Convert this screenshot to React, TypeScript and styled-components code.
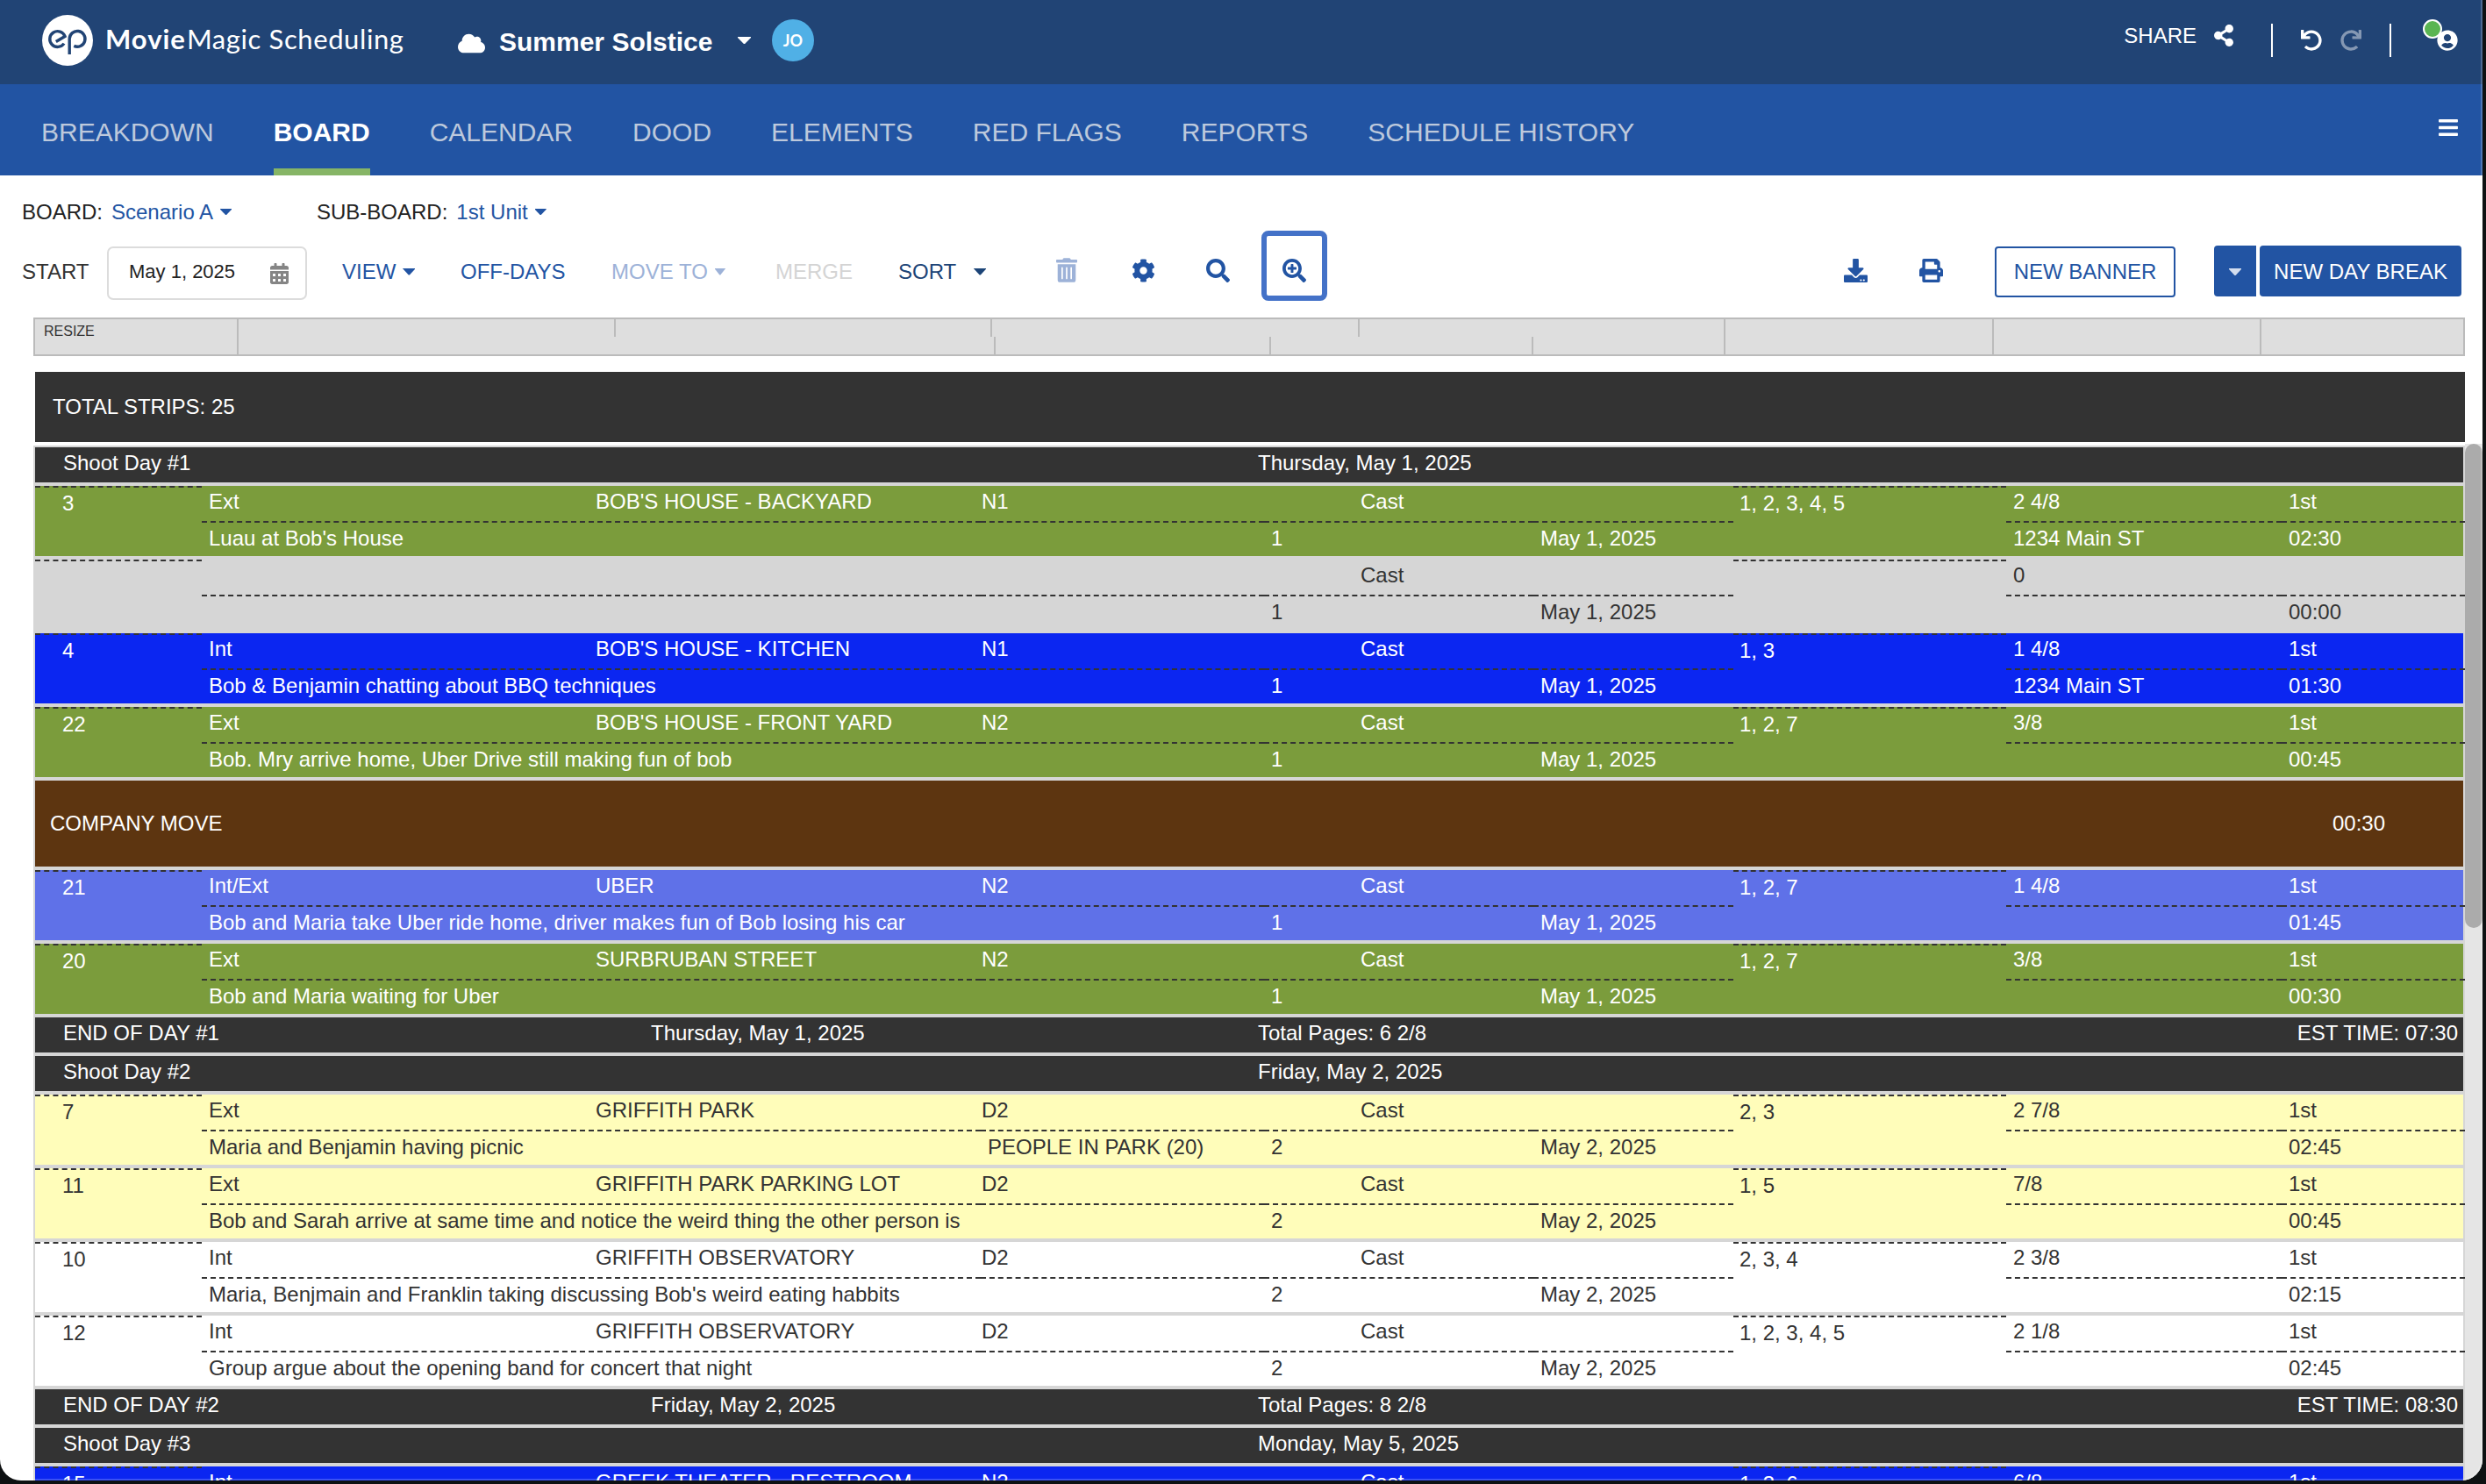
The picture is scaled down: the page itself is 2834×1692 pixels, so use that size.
import React from "react";
import styled, { createGlobalStyle } from "styled-components";
import {
  FaBars,
  FaCalendarAlt,
  FaCloud,
  FaCog,
  FaDownload,
  FaPrint,
  FaRedo,
  FaSearch,
  FaSearchPlus,
  FaShareAlt,
  FaTrashAlt,
  FaUndo,
  FaUserCircle,
} from "react-icons/fa";

const GlobalStyle = createGlobalStyle`
  * { box-sizing: border-box; }
  html, body { margin: 0; padding: 0; }
  body {
    width: 2834px;
    height: 1692px;
    overflow: hidden;
    background: #0e1112;
    font-family: "Liberation Sans", Arial, sans-serif;
    font-size: 24px;
    color: #222;
  }
`;

const Window = styled.div`
  position: relative;
  display: flex;
  flex-direction: column;
  width: 2830px;
  height: 1688px;
  overflow: hidden;
  background: #fff;
  border-radius: 0 0 24px 24px;

  &::after {
    content: "";
    position: absolute;
    inset: 0;
    border-right: 2px solid rgba(255, 255, 255, 0.2);
    border-bottom: 2px solid rgba(255, 255, 255, 0.2);
    border-radius: 0 0 24px 24px;
    pointer-events: none;
  }
`;

/* ---------- Top bar ---------- */

const TopBar = styled.header`
  display: flex;
  align-items: center;
  height: 96px;
  flex: none;
  padding: 0 28px 4px 48px;
  background: #214475;
  color: #fff;
`;

const LogoMark = styled.svg`
  width: 58px;
  height: 58px;
  flex: none;
`;

const Product = styled.div`
  width: 401px;
  padding-left: 14px;
  font-family: Lato, "Open Sans", sans-serif;
  font-size: 31px;
  line-height: 40px;
  letter-spacing: 0.6px;
  white-space: nowrap;
  margin-top: -5px;

  b {
    font-weight: 700;
    letter-spacing: 1px;
    margin-right: 1px;
  }
`;

const CloudIcon = styled(FaCloud)`
  && {
    width: 31px;
    height: 25px;
    flex: none;
    margin: 6px 16px 0 15px;
  }
`;

const ProjectName = styled.div`
  width: 272px;
  font-size: 30px;
  font-weight: 700;
  line-height: 40px;
  margin-top: 3px;
  white-space: nowrap;
`;

const Caret = styled.span<{ $w?: number; $h?: number }>`
  display: inline-block;
  flex: none;
  width: ${(p) => p.$w ?? 14}px;
  height: ${(p) => p.$h ?? 8}px;
  background: currentColor;
  clip-path: polygon(0 0, 100% 0, 100% 12%, 54% 100%, 46% 100%, 0 12%);
`;

const Avatar = styled.div`
  display: flex;
  align-items: center;
  justify-content: center;
  width: 48px;
  height: 48px;
  margin-left: 24px;
  border-radius: 50%;
  background: #50b0e6;
  font: 700 18px Lato, sans-serif;
`;

const TopActions = styled.div`
  display: flex;
  align-items: center;
  margin-left: auto;
`;

const ShareButton = styled.div`
  display: flex;
  align-items: center;
  gap: 20px;
  margin-top: -11px;

  svg {
    width: 22px;
    height: 25px;
  }
`;

const Separator = styled.span<{ $left: number }>`
  width: 2px;
  height: 38px;
  margin-left: ${(p) => p.$left}px;
  background: #fff;
`;

const HistoryButton = styled.span<{ $left: number; $off?: boolean }>`
  display: flex;
  margin-left: ${(p) => p.$left}px;
  font-size: 24px;
  opacity: ${(p) => (p.$off ? 0.45 : 1)};
`;

const Account = styled.span`
  position: relative;
  display: flex;
  margin-left: 52px;
  font-size: 24px;

  &::before {
    content: "";
    position: absolute;
    left: -16px;
    top: -12px;
    width: 18px;
    height: 18px;
    border: 2px solid #fff;
    border-radius: 50%;
    background: #5ab552;
  }
`;

/* ---------- Navigation ---------- */

const Nav = styled.nav`
  display: flex;
  gap: 68px;
  height: 104px;
  flex: none;
  padding: 0 28px 0 47px;
  background: #2254a3;
`;

const Tab = styled.a<{ $active?: boolean }>`
  display: flex;
  align-items: center;
  padding-top: 13px;
  border-bottom: 8px solid ${(p) => (p.$active ? "#86b566" : "transparent")};
  color: ${(p) => (p.$active ? "#fff" : "#bdc9dc")};
  font-size: 30px;
  font-weight: ${(p) => (p.$active ? 700 : 400)};
  white-space: nowrap;
`;

const MenuIcon = styled(FaBars)`
  && {
    width: 22px;
    height: 25px;
    margin: 37px 0 0 auto;
    color: #fff;
  }
`;

/* ---------- Board selectors and tools ---------- */

const Selectors = styled.div`
  display: grid;
  grid-template-columns: 336px auto;
  justify-content: start;
  align-items: center;
  height: 63px;
  flex: none;
  padding: 20px 0 0 25px;
`;

const Selector = styled.div`
  display: flex;
  align-items: center;
  white-space: nowrap;

  a {
    display: flex;
    align-items: center;
    gap: 8px;
    margin-left: 10px;
    color: #2254a3;
  }
`;

const Toolbar = styled.div`
  display: grid;
  grid-template-columns:
    97px 268px 135px 172px 187px 140px 180px 86px 85px 63px 664px
    86px 86px 250px auto;
  align-items: center;
  height: 94px;
  flex: none;
  padding-left: 25px;
  white-space: nowrap;
`;

const Tool = styled.div<{ $color?: string; $gap?: number }>`
  display: flex;
  align-items: center;
  gap: ${(p) => p.$gap ?? 8}px;
  margin-top: -1px;
  color: ${(p) => p.$color ?? "#2254a3"};
`;

const DateField = styled.div`
  display: flex;
  align-items: center;
  justify-content: space-between;
  width: 228px;
  height: 61px;
  margin-top: 3px;
  padding: 0 19px 3px 23px;
  border: 2px solid #dcdcdc;
  border-radius: 7px;
  font-size: 22px;

  svg {
    width: 21px;
    height: 24px;
    margin-top: 3px;
    color: #858585;
  }
`;

const IconTool = styled.div<{ $size?: number; $w?: number; $off?: boolean }>`
  display: flex;
  margin-top: -4px;
  color: ${(p) => (p.$off ? "#9db2d8" : "#2254a3")};

  svg {
    width: ${(p) => p.$w ?? p.$size ?? 27}px;
    height: ${(p) => p.$size ?? 27}px;
  }
`;

const FocusedTool = styled(IconTool)`
  align-self: start;
  align-items: center;
  justify-content: center;
  width: 75px;
  height: 80px;
  margin-top: 0;
  padding-top: 10px;
  border: 6px solid #4472c8;
  border-radius: 8px;
`;

const OutlineButton = styled.button`
  width: 206px;
  height: 58px;
  padding: 0;
  border: 2px solid #2254a3;
  border-radius: 4px;
  background: #fff;
  color: #2254a3;
  font: 24px "Liberation Sans", Arial, sans-serif;
`;

const SplitButton = styled.div`
  display: flex;
  gap: 4px;
  height: 58px;
  margin-top: -2px;
`;

const SolidButton = styled.button<{ $w: number; $radius: string }>`
  display: flex;
  align-items: center;
  justify-content: center;
  width: ${(p) => p.$w}px;
  padding: 2px 0 0;
  border: 0;
  border-radius: ${(p) => p.$radius};
  background: #2254a3;
  color: #fff;
  font: 24px "Liberation Sans", Arial, sans-serif;

  span {
    color: #d3ddee;
  }
`;

/* ---------- Column ruler ---------- */

const Ruler = styled.div`
  display: grid;
  grid-template-columns: 232px 1695px 306px 305px auto;
  width: 2772px;
  height: 44px;
  flex: none;
  margin: 5px 0 18px 38px;
  border: 2px solid #bbb;
  background: #dedede;
`;

const RulerCell = styled.div`
  padding: 2px 10px;
  border-right: 2px solid #bbb;
  font-size: 16px;
  line-height: 24px;
  color: #333;

  &:last-child {
    border-right: 0;
  }
`;

const RulerSplit = styled.div`
  display: grid;
  grid-template-rows: 20px 20px;
  border-right: 2px solid #bbb;
`;

const RulerTrack = styled.div<{ $cols: string }>`
  display: grid;
  grid-template-columns: ${(p) => p.$cols};
`;

const RulerTick = styled.span`
  border-right: 2px solid #bbb;
`;

/* ---------- Strip board ---------- */

const TotalBar = styled.div`
  width: 2770px;
  height: 80px;
  flex: none;
  margin: 0 0 2px 40px;
  padding-left: 20px;
  background: #333;
  color: #fff;
  line-height: 79px;
`;

const BoardArea = styled.div`
  display: flex;
  flex: 1;
  min-height: 0;
  padding-left: 38px;
`;

const Strips = styled.div`
  display: flex;
  flex-direction: column;
  gap: 4px;
  width: 2772px;
  height: 1300px;
  margin-top: 2px;
  padding: 2px;
  background: #d6d6d6;
`;

const ScrollTrack = styled.div`
  width: 20px;
  background: #e5e5e5;
`;

const ScrollThumb = styled.div`
  height: 552px;
  border-radius: 10px;
  background: #ababab;
`;

const DayRow = styled.div`
  display: grid;
  grid-template-columns: 670px 692px 1fr auto;
  height: 40px;
  flex: none;
  padding: 0 6px 0 32px;
  background: #333;
  color: #fff;
  line-height: 36px;
`;

const BannerRow = styled.div`
  display: grid;
  grid-template-columns: 2602px auto;
  height: 98px;
  flex: none;
  padding-left: 17px;
  background: #5d3510;
  color: #fff;
  line-height: 97px;
`;

const Strip = styled.div<{ $bg: string; $fg: string }>`
  display: grid;
  grid-template-columns: 190px 1746px 311px 523px;
  height: 80px;
  flex: none;
  background: ${(p) => p.$bg};
  color: ${(p) => p.$fg};
  line-height: 36px;
  white-space: nowrap;
`;

const TallCell = styled.div<{ $pad: number }>`
  padding-left: ${(p) => p.$pad}px;
  border-top: 2px dashed #333;
`;

const SplitCell = styled.div`
  display: grid;
  grid-template-rows: 40px 40px;
`;

const Line = styled.div<{ $cols: string }>`
  display: grid;
  grid-template-columns: ${(p) => p.$cols};
`;

const Cell = styled.div<{ $ruled?: boolean }>`
  min-width: 0;
  padding-left: 8px;
  border-top: ${(p) => (p.$ruled ? "2px dashed #333" : "0")};
`;

type SceneData = {
  kind: "scene";
  tone: keyof typeof tones;
  scene: string;
  ie: string;
  set: string;
  time: string;
  synopsis: string;
  extras?: string;
  day: string;
  date: string;
  cast: string;
  pages: string;
  location?: string;
  unit: string;
  est: string;
};

type RowData =
  | SceneData
  | { kind: "start"; label: string; date: string }
  | { kind: "end"; label: string; date: string; pages: string; est: string }
  | { kind: "banner"; label: string; est: string };

const tones = {
  green: { bg: "#7b9c3c", fg: "#fff" },
  gray: { bg: "#d6d6d6", fg: "#333" },
  blue: { bg: "#0b26f1", fg: "#fff" },
  violet: { bg: "#5f71e8", fg: "#fff" },
  yellow: { bg: "#fffdba", fg: "#333" },
  white: { bg: "#fff", fg: "#333" },
};

const MAY1 = "May 1, 2025";
const MAY2 = "May 2, 2025";

const rows: RowData[] = [
  { kind: "start", label: "Shoot Day #1", date: "Thursday, May 1, 2025" },
  { kind: "scene", tone: "green", scene: "3", ie: "Ext", set: "BOB'S HOUSE - BACKYARD", time: "N1", synopsis: "Luau at Bob's House", day: "1", date: MAY1, cast: "1, 2, 3, 4, 5", pages: "2 4/8", location: "1234 Main ST", unit: "1st", est: "02:30" },
  { kind: "scene", tone: "gray", scene: "", ie: "", set: "", time: "", synopsis: "", day: "1", date: MAY1, cast: "", pages: "0", unit: "", est: "00:00" },
  { kind: "scene", tone: "blue", scene: "4", ie: "Int", set: "BOB'S HOUSE - KITCHEN", time: "N1", synopsis: "Bob & Benjamin chatting about BBQ techniques", day: "1", date: MAY1, cast: "1, 3", pages: "1 4/8", location: "1234 Main ST", unit: "1st", est: "01:30" },
  { kind: "scene", tone: "green", scene: "22", ie: "Ext", set: "BOB'S HOUSE - FRONT YARD", time: "N2", synopsis: "Bob. Mry arrive home, Uber Drive still making fun of bob", day: "1", date: MAY1, cast: "1, 2, 7", pages: "3/8", unit: "1st", est: "00:45" },
  { kind: "banner", label: "COMPANY MOVE", est: "00:30" },
  { kind: "scene", tone: "violet", scene: "21", ie: "Int/Ext", set: "UBER", time: "N2", synopsis: "Bob and Maria take Uber ride home, driver makes fun of Bob losing his car", day: "1", date: MAY1, cast: "1, 2, 7", pages: "1 4/8", unit: "1st", est: "01:45" },
  { kind: "scene", tone: "green", scene: "20", ie: "Ext", set: "SURBRUBAN STREET", time: "N2", synopsis: "Bob and Maria waiting for Uber", day: "1", date: MAY1, cast: "1, 2, 7", pages: "3/8", unit: "1st", est: "00:30" },
  { kind: "end", label: "END OF DAY #1", date: "Thursday, May 1, 2025", pages: "6 2/8", est: "07:30" },
  { kind: "start", label: "Shoot Day #2", date: "Friday, May 2, 2025" },
  { kind: "scene", tone: "yellow", scene: "7", ie: "Ext", set: "GRIFFITH PARK", time: "D2", synopsis: "Maria and Benjamin having picnic", extras: "PEOPLE IN PARK (20)", day: "2", date: MAY2, cast: "2, 3", pages: "2 7/8", unit: "1st", est: "02:45" },
  { kind: "scene", tone: "yellow", scene: "11", ie: "Ext", set: "GRIFFITH PARK PARKING LOT", time: "D2", synopsis: "Bob and Sarah arrive at same time and notice the weird thing the other person is", day: "2", date: MAY2, cast: "1, 5", pages: "7/8", unit: "1st", est: "00:45" },
  { kind: "scene", tone: "white", scene: "10", ie: "Int", set: "GRIFFITH OBSERVATORY", time: "D2", synopsis: "Maria, Benjmain and Franklin taking discussing Bob's weird eating habbits", day: "2", date: MAY2, cast: "2, 3, 4", pages: "2 3/8", unit: "1st", est: "02:15" },
  { kind: "scene", tone: "white", scene: "12", ie: "Int", set: "GRIFFITH OBSERVATORY", time: "D2", synopsis: "Group argue about the opening band for concert that night", day: "2", date: MAY2, cast: "1, 2, 3, 4, 5", pages: "2 1/8", unit: "1st", est: "02:45" },
  { kind: "end", label: "END OF DAY #2", date: "Friday, May 2, 2025", pages: "8 2/8", est: "08:30" },
  { kind: "start", label: "Shoot Day #3", date: "Monday, May 5, 2025" },
  { kind: "scene", tone: "blue", scene: "15", ie: "Int", set: "GREEK THEATER - RESTROOM", time: "N2", synopsis: "", day: "3", date: "May 5, 2025", cast: "1, 3, 6", pages: "6/8", unit: "1st", est: "" },
];

const TOP_COLS = "441px 440px 432px 433px";
const BOTTOM_COLS = "888px 323px 307px 228px";
const SIDE_COLS = "314px 209px";

function SceneStrip({ row }: { row: SceneData }) {
  const { bg, fg } = tones[row.tone];
  return (
    <Strip $bg={bg} $fg={fg}>
      <TallCell $pad={31}>{row.scene}</TallCell>
      <SplitCell>
        <Line $cols={TOP_COLS}>
          <Cell>{row.ie}</Cell>
          <Cell>{row.set}</Cell>
          <Cell>{row.time}</Cell>
          <Cell>Cast</Cell>
        </Line>
        <Line $cols={BOTTOM_COLS}>
          <Cell $ruled>{row.synopsis}</Cell>
          <Cell $ruled>{row.extras}</Cell>
          <Cell $ruled>{row.day}</Cell>
          <Cell $ruled>{row.date}</Cell>
        </Line>
      </SplitCell>
      <TallCell $pad={7}>{row.cast}</TallCell>
      <SplitCell>
        <Line $cols={SIDE_COLS}>
          <Cell>{row.pages}</Cell>
          <Cell>{row.unit}</Cell>
        </Line>
        <Line $cols={SIDE_COLS}>
          <Cell $ruled>{row.location}</Cell>
          <Cell $ruled>{row.est}</Cell>
        </Line>
      </SplitCell>
    </Strip>
  );
}

function BoardRow({ row }: { row: RowData }) {
  switch (row.kind) {
    case "start":
      return (
        <DayRow>
          <span>{row.label}</span>
          <span />
          <span>{row.date}</span>
        </DayRow>
      );
    case "end":
      return (
        <DayRow>
          <span>{row.label}</span>
          <span>{row.date}</span>
          <span>Total Pages: {row.pages}</span>
          <span>EST TIME: {row.est}</span>
        </DayRow>
      );
    case "banner":
      return (
        <BannerRow>
          <span>{row.label}</span>
          <span>{row.est}</span>
        </BannerRow>
      );
    default:
      return <SceneStrip row={row} />;
  }
}

const tabs = ["BREAKDOWN", "BOARD", "CALENDAR", "DOOD", "ELEMENTS", "RED FLAGS", "REPORTS", "SCHEDULE HISTORY"];

export default function App() {
  return (
    <>
      <GlobalStyle />
      <Window>
        <TopBar>
          <LogoMark viewBox="0 0 58 58" fill="none" stroke="#214475" strokeWidth="3.4">
            <circle cx="29" cy="29" r="29" fill="#fff" stroke="none" />
            <path d="M25 32.6A8.9 8.9 0 1 1 26 24.4L15.8 30.5" />
            <path d="M31.2 45V27.3A8.9 8.9 0 1 1 36.3 35.4" />
          </LogoMark>
          <Product>
            <b>Movie</b>Magic Scheduling
          </Product>
          <CloudIcon />
          <ProjectName>Summer Solstice</ProjectName>
          <Caret $w={15} $h={8} />
          <Avatar>JO</Avatar>
          <TopActions>
            <ShareButton>
              SHARE <FaShareAlt />
            </ShareButton>
            <Separator $left={43} />
            <HistoryButton $left={32}>
              <FaUndo />
            </HistoryButton>
            <HistoryButton $left={21} $off>
              <FaRedo />
            </HistoryButton>
            <Separator $left={32} />
            <Account>
              <FaUserCircle />
            </Account>
          </TopActions>
        </TopBar>

        <Nav>
          {tabs.map((t) => (
            <Tab key={t} $active={t === "BOARD"}>
              {t}
            </Tab>
          ))}
          <MenuIcon />
        </Nav>

        <Selectors>
          <Selector>
            BOARD:
            <a>
              Scenario A <Caret $w={13} $h={7} />
            </a>
          </Selector>
          <Selector>
            SUB-BOARD:
            <a>
              1st Unit <Caret $w={13} $h={7} />
            </a>
          </Selector>
        </Selectors>

        <Toolbar>
          <Tool $color="#333">START</Tool>
          <DateField>
            May 1, 2025 <FaCalendarAlt />
          </DateField>
          <Tool>
            VIEW <Caret />
          </Tool>
          <Tool>OFF-DAYS</Tool>
          <Tool $color="#9db2d8">
            MOVE TO <Caret $w={12} />
          </Tool>
          <Tool $color="#d4d4d4">MERGE</Tool>
          <Tool $color="#1c4477" $gap={20}>
            SORT <Caret />
          </Tool>
          <IconTool $w={24} $size={28} $off>
            <FaTrashAlt />
          </IconTool>
          <IconTool>
            <FaCog />
          </IconTool>
          <IconTool>
            <FaSearch />
          </IconTool>
          <FocusedTool>
            <FaSearchPlus />
          </FocusedTool>
          <IconTool>
            <FaDownload />
          </IconTool>
          <IconTool>
            <FaPrint />
          </IconTool>
          <OutlineButton>NEW BANNER</OutlineButton>
          <SplitButton>
            <SolidButton $w={48} $radius="4px 0 0 4px" aria-label="Day break options">
              <Caret />
            </SolidButton>
            <SolidButton $w={230} $radius="4px">
              NEW DAY BREAK
            </SolidButton>
          </SplitButton>
        </Toolbar>

        <Ruler>
          <RulerCell>RESIZE</RulerCell>
          <RulerSplit>
            <RulerTrack $cols="430px 429px 419px 1fr">
              <RulerTick />
              <RulerTick />
              <RulerTick />
            </RulerTrack>
            <RulerTrack $cols="863px 314px 299px 1fr">
              <RulerTick />
              <RulerTick />
              <RulerTick />
            </RulerTrack>
          </RulerSplit>
          <RulerCell />
          <RulerCell />
          <RulerCell />
        </Ruler>

        <TotalBar>TOTAL STRIPS: 25</TotalBar>

        <BoardArea>
          <Strips>
            {rows.map((row, i) => (
              <BoardRow key={i} row={row} />
            ))}
          </Strips>
          <ScrollTrack>
            <ScrollThumb />
          </ScrollTrack>
        </BoardArea>
      </Window>
    </>
  );
}
